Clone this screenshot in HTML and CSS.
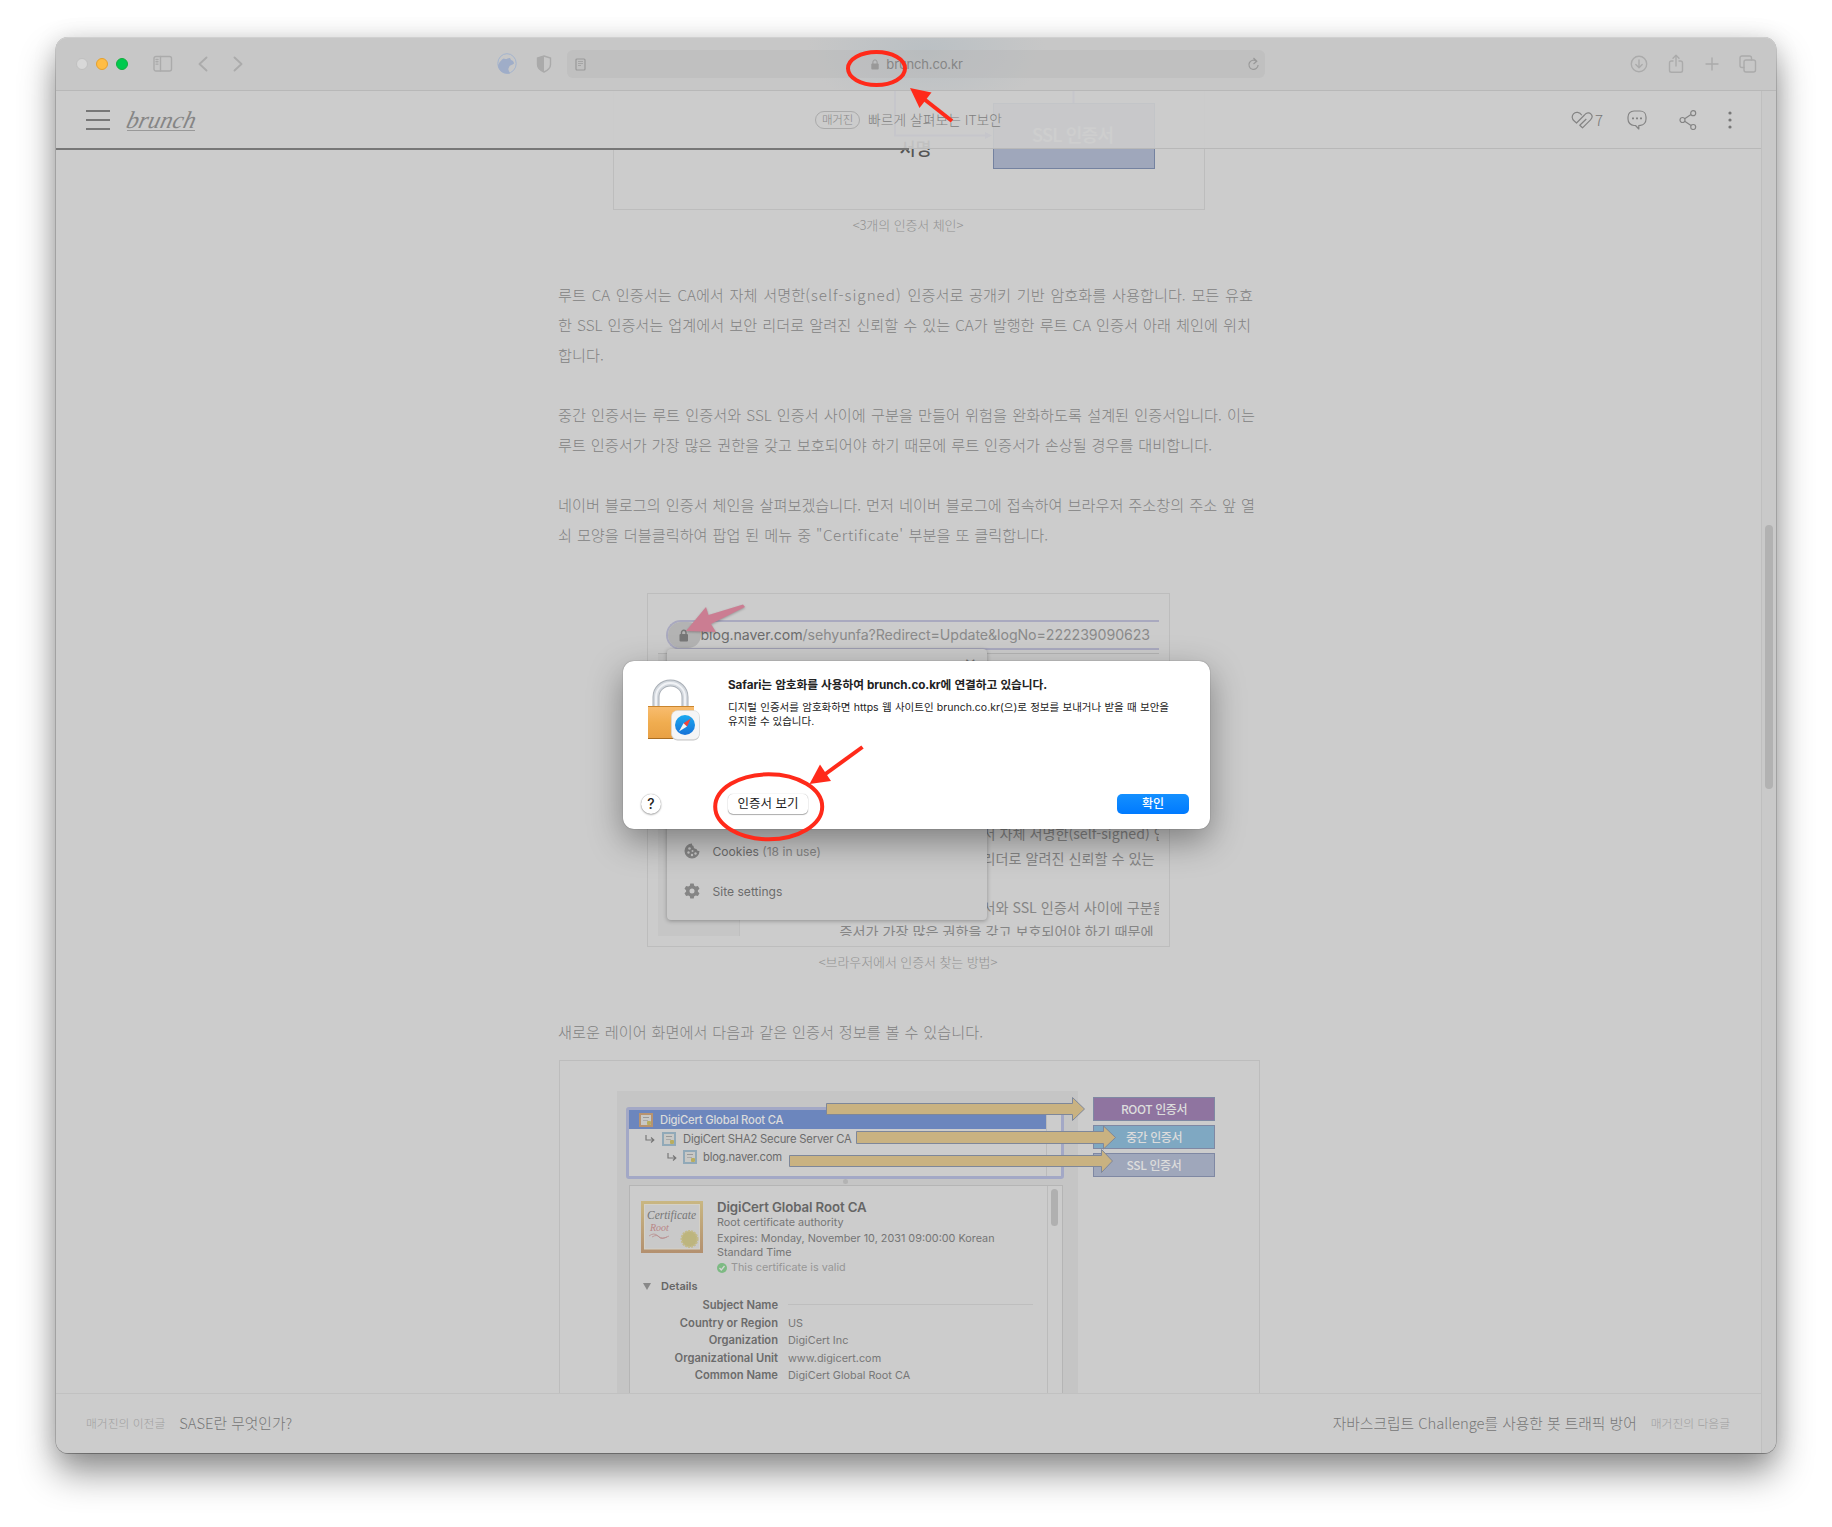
FILE: index.html
```html
<!DOCTYPE html>
<html lang="ko">
<head>
<meta charset="utf-8">
<title>brunch.co.kr</title>
<link rel="stylesheet" href="styles.css">
</head>
<body>
<div class="window">
  <div class="toolbar">
    <div class="lights"><i class="light off"></i><i class="light min"></i><i class="light max"></i></div>
    <svg class="ic sidebar" width="20" height="18" viewBox="0 0 20 18"><rect x="1" y="1.500" width="17.500" height="14.500" rx="2"/><path d="M7.500 1.500V16M3 4.500h2M3 6.800h2M3 9.100h2"/></svg>
    <svg class="ic nav" width="10" height="16" viewBox="0 0 10 16"><path d="M8.500 1.500L1.500 8L8.500 14.500"/></svg>
    <svg class="ic nav next" width="10" height="16" viewBox="0 0 10 16"><path d="M1.500 1.500L8.500 8L1.500 14.500"/></svg>
    <svg class="wolf" width="20" height="22" viewBox="0 0 20 22"><ellipse cx="10" cy="10.500" rx="9.200" ry="9.800" fill="none" stroke="#a3b4cf"/><path d="M1 13C1.500 9.500 4 8 5 6.500L6.500 5.500L8.500 6C10 6 12 4.500 13 5L14 7C16 7.500 17 9 17 10.500C15 12 13.500 12 12.500 13C12.500 14.500 11 15 11.500 17L13 20.500C7 21.500 2 18.500 1 13Z" fill="#9fadc8"/></svg>
    <svg class="shield" width="16" height="18" viewBox="0 0 16 18"><path d="M8 1L14.500 3V9.500C14.500 13 11 15.700 8 17C5 15.700 1.500 13 1.500 9.500V3Z" fill="none" stroke="#aaa" stroke-width="1.400"/><path d="M8 1V17C5 15.700 1.500 13 1.500 9.500V3Z" fill="#aaa"/></svg>
    <div class="address">
      <svg class="reader" width="11" height="13" viewBox="0 0 11 13"><rect x="1" y="1" width="9" height="11" rx="1" fill="none" stroke="#999" stroke-width="1.200"/><path d="M3 3.500h5M3 5.500h5M3 7.500h3" stroke="#a5a5a5"/></svg>
      <div class="host"><svg width="8" height="11" viewBox="0 0 8 11"><rect x="0.300" y="4.500" width="7.400" height="6" rx="1" fill="#999"/><path d="M1.900 5V3A2.100 2.100 0 0 1 6.100 3V5" fill="none" stroke="#999"/></svg><span>brunch.co.kr</span></div>
      <svg class="reload" width="13" height="14" viewBox="0 0 13 14"><path d="M9.500 4.300A4.600 4.600 0 1 0 11.100 8M6.500 1L9.800 4.300L6.500 7" fill="none" stroke="#999" stroke-width="1.200"/></svg>
    </div>
    <div class="tools">
      <svg class="ic" width="18" height="18" viewBox="0 0 18 18"><circle cx="9" cy="9" r="7.700"/><path d="M9 5V12.500M5.800 9.500L9 12.700L12.200 9.500"/></svg>
      <svg class="ic" width="16" height="20" viewBox="0 0 16 20"><path d="M5 7H3.500Q1.500 7 1.500 9V16.500Q1.500 18.300 3.500 18.300H12.500Q14.500 18.300 14.500 16.500V9Q14.500 7 12.500 7H11M8 12V1.500M5 4.300L8 1.300L11 4.300"/></svg>
      <svg class="ic" width="14" height="14" viewBox="0 0 14 14"><path d="M7 1V13M1 7H13"/></svg>
      <svg class="ic" width="18" height="18" viewBox="0 0 18 18"><rect x="5" y="5" width="11.500" height="12" rx="2"/><path d="M5 12.500H3Q1 12.500 1 10.500V3Q1 1 3 1H10.500Q12.500 1 12.500 3V5"/></svg>
    </div>
  </div>

  <div class="viewport">
    <div class="page">
      <article class="article">
        <figure class="fig chain">
          <svg width="590" height="118" viewBox="0 0 590 118">
            <rect x="379.500" y="12.500" width="161" height="65" fill="#9fa7bb" stroke="#7482a0"/>
            <text x="459" y="51" class="chain-label" text-anchor="middle" textLength="82">SSL 인증서</text>
            <path d="M281 0V44.500H374M459.500 0V12" fill="none" stroke="#8f8fc0" stroke-width="2"/>
            <path d="M371 41L378 44.500L371 48Z" fill="#8f8fc0"/>
            <text x="285.500" y="64" class="sign">서명</text>
          </svg>
        </figure>
        <p class="caption">&lt;3개의 인증서 체인&gt;</p>
        <p class="para"><span class="w695">루트 CA 인증서는 CA에서 자체 서명한<em>(self-signed)</em> 인증서로 공개키 기반 암호화를 사용합니다. 모든 유효</span><span class="w693">한 SSL 인증서는 업계에서 보안 리더로 알려진 신뢰할 수 있는 CA가 발행한 루트 CA 인증서 아래 체인에 위치</span><span class="w47">합니다.</span></p>
        <p class="para"><span class="w697">중간 인증서는 루트 인증서와 SSL 인증서 사이에 구분을 만들어 위험을 완화하도록 설계된 인증서입니다. 이는</span><span class="w654">루트 인증서가 가장 많은 권한을 갖고 보호되어야 하기 때문에 루트 인증서가 손상될 경우를 대비합니다.</span></p>
        <p class="para"><span class="w697">네이버 블로그의 인증서 체인을 살펴보겠습니다. 먼저 네이버 블로그에 접속하여 브라우저 주소창의 주소 앞 열</span><span class="w490">쇠 모양을 더블클릭하여 팝업 된 메뉴 중 <em class="c">"Certificate'</em> 부분을 또 클릭합니다.</span></p>

        <figure class="fig howto">
          <div class="shot">
            <div class="omnibox"><span class="lockpill"><svg width="10" height="13" viewBox="0 0 10 13"><rect x="0.500" y="5" width="8.500" height="7.500" rx="1" fill="#777"/><path d="M2.500 5.500V3.500A2.200 2.200 0 0 1 7 3.500V5.500" fill="none" stroke="#777" stroke-width="1.400"/></svg></span><span class="url"><b>blog.naver.com</b>/sehyunfa?Redirect=Update&amp;logNo=222239090623</span></div>
            <div class="underpage">
              <div class="leftpane"></div>
              <div class="copy"><p class="in">서 자체 서명한(self-signed) 인</p><p class="in">리더로 알려진 신뢰할 수 있는</p><p>&nbsp;</p><p class="in">서와 SSL 인증서 사이에 구분을</p><p>증서가 가장 많은 권한을 갖고 보호되어야 하기 때문에</p></div>
            </div>
            <div class="popup">
              <span class="close">✕</span>
              <div class="item"><svg width="16" height="16" viewBox="0 0 16 16"><path d="M8 .5A7.500 7.500 0 1 0 15.500 8A2.500 2.500 0 0 1 12.500 6A3 3 0 0 1 9.500 3A2 2 0 0 1 8 .5Z" fill="#858585"/><g fill="#cacaca"><circle cx="5.500" cy="5.500" r="1.300"/><circle cx="4.500" cy="9.500" r="1.200"/><circle cx="8.500" cy="8" r="1"/><circle cx="8" cy="12" r="1.200"/><circle cx="11.500" cy="10.500" r="1.200"/></g></svg><span>Cookies <em>(18 in use)</em></span></div>
              <div class="item"><svg width="16" height="16" viewBox="0 0 16 16"><path fill-rule="evenodd" fill="#858585" d="M6.300 .5H9.700L10.200 2.700L11.700 3.600L13.900 2.900L15.500 5.800L13.900 7.200V8.800L15.500 10.200L13.900 13.100L11.700 12.400L10.200 13.300L9.700 15.500H6.300L5.800 13.300L4.300 12.400L2.100 13.100L.5 10.200L2.100 8.800V7.200L.5 5.800L2.100 2.900L4.300 3.600L5.800 2.700ZM8 5.500A2.500 2.500 0 1 0 8 10.500A2.500 2.500 0 1 0 8 5.500Z"/></svg><span>Site settings</span></div>
            </div>
            <svg class="pinkarrow" width="66" height="34" viewBox="0 0 66 34"><path d="M3 29L23 5L25.500 13L60 2.500L62 5L28 22L33 30Z" fill="#cb7d92"/></svg>
          </div>
        </figure>
        <p class="caption">&lt;브라우저에서 인증서 찾는 방법&gt;</p>
        <p class="para last"><span class="w425">새로운 레이어 화면에서 다음과 같은 인증서 정보를 볼 수 있습니다.</span></p>

        <figure class="fig cert">
          <div class="certwin">
            <div class="tree">
              <div class="rows">
                <div class="row sel"><i class="leaf gold"></i><span>DigiCert Global Root CA</span></div>
                <div class="row r2"><svg width="10" height="10" viewBox="0 0 10 10"><path d="M1 1V6H8.500M6 3.500L8.800 6L6 8.500" fill="none" stroke="#777" stroke-width="1.200"/></svg><i class="leaf"></i><span>DigiCert SHA2 Secure Server CA</span></div>
                <div class="row r3"><svg width="10" height="10" viewBox="0 0 10 10"><path d="M1 1V6H8.500M6 3.500L8.800 6L6 8.500" fill="none" stroke="#777" stroke-width="1.200"/></svg><i class="leaf"></i><span>blog.naver.com</span></div>
              </div>
              <div class="gutter"></div>
            </div>
            <i class="grip"></i>
            <div class="detail">
              <div class="info">
                <div class="summary">
                  <svg width="62" height="52" viewBox="0 0 62 52"><defs><linearGradient id="frame" x1="0" y1="0" x2="0" y2="1"><stop offset="0" stop-color="#c9b782"/><stop offset="1" stop-color="#b3906f"/></linearGradient></defs><rect width="62" height="52" fill="url(#frame)"/><rect x="3.500" y="3.500" width="55" height="44.500" fill="#c9c9c9" stroke="#d5d1c6"/><text x="6" y="18" class="diploma" textLength="49">Certificate</text><text x="9" y="30" class="diploma red">Root</text><path d="M8 35Q13 31 17 35T28 35M11 36Q16 33 18 36T26 36" fill="none" stroke="#b98e8e" stroke-width=".8"/><circle cx="48.500" cy="38" r="8" fill="#bdb57e" stroke="#c4bb8b" stroke-width="2" stroke-dasharray="2 1"/></svg>
                  <div class="who"><h4>DigiCert Global Root CA</h4><p>Root certificate authority</p><p class="exp">Expires: Monday, November 10, 2031 09:00:00 Korean<br>Standard Time</p><p class="valid"><svg width="10" height="10" viewBox="0 0 10 10"><circle cx="5" cy="5" r="5" fill="#7dba83"/><path d="M2.500 5L4.300 7L7.500 3" fill="none" stroke="#d5d5d5" stroke-width="1.300"/></svg>This certificate is valid</p></div>
                </div>
                <div class="dt"><i class="tri"></i><span>Details</span></div>
                <dl><dt>Subject Name</dt><dd class="rule"></dd><dt>Country or Region</dt><dd>US</dd><dt>Organization</dt><dd>DigiCert Inc</dd><dt>Organizational Unit</dt><dd>www.digicert.com</dd><dt>Common Name</dt><dd>DigiCert Global Root CA</dd></dl>
              </div>
              <div class="gutter"><i></i></div>
            </div>
          </div>
          <div class="labels"><span class="root">ROOT 인증서</span><span class="mid">중간 인증서</span><span class="ssl">SSL 인증서</span></div>
          <svg class="arrows" width="340" height="90" viewBox="780 1090 340 90"><g fill="#c9b281" stroke="#7e8799" stroke-width="1"><path d="M826.500 1103.500H1072.500V1097.500L1084.500 1109L1072.500 1120.500V1114.500H826.500Z"/><path d="M856.500 1131.500H1103.500V1126L1115.500 1137.500L1103.500 1149V1143.500H856.500Z"/><path d="M789.500 1155.500H1101.500V1149.500L1112.500 1161L1101.500 1172.500V1166.500H789.500Z"/></g></svg>
        </figure>
      </article>

      <header class="header">
        <div class="burger"><i></i><i></i><i></i></div>
        <div class="logo"><span>brunch</span></div>
        <div class="mag"><span class="pill">매거진</span><span class="magname">빠르게 살펴보는 IT보안</span></div>
        <div class="acts">
          <svg class="hc" width="22" height="18" viewBox="0 0 22 18"><path d="M10.800 4.200C8.800 .8 4.500 .5 2.500 2.800C.5 5 1 8 3 9.800L5.500 12L13.500 4C15.500 1.300 18.500 1.500 19.800 2.800C21.500 4.500 21.300 7 19.500 8.800L11.500 16.800L8.800 14.200L15.300 8"/></svg><b>7</b>
          <svg class="hc cm" width="20" height="20" viewBox="0 0 20 20"><path d="M7 1H13C16.500 1 19 3.500 19 7V9C19 12.500 16.500 15 13.500 15.300L11.800 15.500V19L8.500 15.500H7C3.500 15.300 1 12.500 1 9V7C1 3.500 3.500 1 7 1Z"/><path d="M5 8.300h2M9 8.300h2M13 8.300h2" stroke-width="1.800"/></svg>
          <svg class="hc sh" width="18" height="20" viewBox="0 0 18 20"><circle cx="3.500" cy="10" r="2.500"/><circle cx="14.200" cy="3.200" r="2.500"/><circle cx="14.200" cy="17" r="2.500"/><path d="M5.700 8.700L12 4.600M5.700 11.300L12 15.600"/></svg>
          <svg class="dots" width="4" height="18" viewBox="0 0 4 18"><g fill="#777"><circle cx="2" cy="2" r="1.600"/><circle cx="2" cy="9" r="1.600"/><circle cx="2" cy="16" r="1.600"/></g></svg>
        </div>
        <div class="progress"></div>
      </header>

      <footer class="footer">
        <div><small>매거진의 이전글</small><span>SASE란 무엇인가?</span></div>
        <div><span>자바스크립트 Challenge를 사용한 봇 트래픽 방어</span><small>매거진의 다음글</small></div>
      </footer>
    </div>
    <div class="scroll"><i></i></div>
  </div>

  <div class="dialog">
    <div class="msg">
      <svg class="padlock" width="54" height="64" viewBox="0 0 54 64"><defs><linearGradient id="gold" x1="0" y1="0" x2="0" y2="1"><stop offset="0" stop-color="#f9bd70"/><stop offset=".5" stop-color="#f0ad50"/><stop offset="1" stop-color="#e8a044"/></linearGradient><linearGradient id="blue" x1="0" y1="0" x2="0" y2="1"><stop offset="0" stop-color="#1ba9f0"/><stop offset="1" stop-color="#1672d8"/></linearGradient></defs><path d="M9 29V18A14.500 14 0 0 1 38 18V29" fill="none" stroke="#a9afb6" stroke-width="7"/><path d="M9 29V18A14.500 14 0 0 1 38 18V29" fill="none" stroke="#d3d8de" stroke-width="5"/><path d="M9 29V18A14.500 14 0 0 1 38 18V29" fill="none" stroke="#f0f2f5" stroke-width="2"/><rect x="1" y="27" width="46" height="33" rx="1.500" fill="url(#gold)"/><path d="M1 27.500H47" stroke="#c9852e"/><path d="M1 59.500H47" stroke="#aa6e23"/><rect x="24.500" y="32.500" width="28" height="29" rx="6" fill="#c4c4c4"/><rect x="24.500" y="31.500" width="28" height="29" rx="6" fill="#f5f5f6" stroke="#d5d5d5" stroke-width=".6"/><circle cx="38" cy="46" r="10" fill="url(#blue)"/><path d="M44 39.500L40 47.500L36.500 44.200Z" fill="#f0463c"/><path d="M32 52.500L36.500 44.200L40 47.500Z" fill="#f5f5f5"/></svg>
      <div class="words"><h3>Safari는 암호화를 사용하여 brunch.co.kr에 연결하고 있습니다.</h3><p><span class="l1">디지털 인증서를 암호화하면 https 웹 사이트인 brunch.co.kr(으)로 정보를 보내거나 받을 때 보안을</span><span class="l2">유지할 수 있습니다.</span></p></div>
    </div>
    <div class="btns"><span class="help">?</span><span class="btn">인증서 보기</span><span class="ok">확인</span></div>
  </div>
</div>
<svg class="marks" width="1832" height="1527" viewBox="0 0 1832 1527"><g fill="none" stroke="#ff2a1a" stroke-width="4"><ellipse cx="876.500" cy="68.500" rx="28.500" ry="16.500"/><path d="M952 121L924 99"/><ellipse cx="768.700" cy="806.800" rx="53.500" ry="32.500"/><path d="M862.500 747L824 775"/></g><g fill="#ff2a1a"><path d="M910 88L931.500 92.500L919.500 108Z"/><path d="M809.500 784L820 764.500L831 781Z"/></g></svg>
</body>
</html>
```
FILE: styles.css
```css
* { box-sizing: border-box; }
body, p, figure, h3, h4, dl, dd { margin: 0; }
body { width: 1832px; height: 1527px; overflow: hidden; padding: 37px 0 0 56px; background: #fff; font-family: Inter, "Noto Sans CJK KR", sans-serif; color: #777; position: relative; }
svg { display: block; flex: none; }
i { display: block; flex: none; }
.window { position: relative; width: 1720px; height: 1416px; border-radius: 12px; background: #ccc; box-shadow: 0 .5px 0 .5px rgba(0,0,0,.3), 0 20px 36px rgba(0,0,0,.42), 0 2px 24px rgba(0,0,0,.12); }

.toolbar { height: 54px; border-bottom: 1px solid #b8b8b8; border-radius: 12px 12px 0 0; border-top: 1px solid #d0d0d0; background: radial-gradient(ellipse 120px 60px at 870px 14px, #bac0c4, rgba(186,192,196,0)), #c7c7c7; display: flex; align-items: center; padding-left: 20px; }
.lights { display: flex; gap: 8px; width: 77px; }
.light { width: 12px; height: 12px; border-radius: 50%; }
.off { background: #d8d8d8; border: 1px solid #c0c0c0; }
.min { background: #ffbd44; border: 1px solid #e6a02c; }
.max { background: #00ca4e; border: 1px solid #14ac3e; }
.ic { fill: none; stroke: #ababab; stroke-width: 1.4; stroke-linecap: round; stroke-linejoin: round; }
.nav { margin-left: 25px; stroke-width: 1.9; }
.wolf { margin-left: 254px; }
.shield { margin-left: 19px; }
.address { margin-left: 15px; width: 698px; height: 28px; border-radius: 6px; background: rgba(185,185,185,.45); display: flex; align-items: center; justify-content: space-between; padding: 0 5px 0 8px; }
.host { display: flex; align-items: center; gap: 7px; font-size: 13px; letter-spacing: -.15px; color: #858585; padding-left: 1px; }
.tools { display: flex; align-items: center; margin-left: 365px; gap: 20.400px; }

.viewport { height: 1362px; display: flex; overflow: hidden; border-radius: 0 0 12px 12px; }
.page { position: relative; width: 1705px; overflow: hidden; flex: none; }
.scroll { width: 15px; border-left: 1px solid #bfbfbf; background: #c9c9c9; padding: 434px 0 0 3px; }
.scroll i { width: 8px; height: 264px; border-radius: 4px; background: #b2b2b2; }

.article { width: 702px; margin-left: 502px; display: flex; flex-direction: column; align-items: center; font-family: "Noto Sans CJK KR", sans-serif; }
.fig { border: 1px solid #bdbdbd; }
.chain { width: 592px; height: 119px; border-top: 0; }
.chain-label { font-size: 18px; font-weight: 500; fill: #e2e2e2; }
.sign { font-size: 17.500px; font-weight: 500; fill: #555; }
.caption { height: 32px; line-height: 30px; font-size: 13px; font-weight: 300; color: #929292; letter-spacing: -.1px; padding-right: 2px; }
.para { align-self: stretch; margin-top: 30px; font-size: 15.200px; line-height: 30px; font-weight: 300; color: #828282; position: relative; top: -1px; }
.caption + .para { margin-top: 38px; }
.para span { display: block; white-space: nowrap; text-align-last: justify; }
.para em { font-style: normal; letter-spacing: 1px; }
.para em.c { letter-spacing: .6px; }
.w695 { width: 695px; } .w693 { width: 693px; } .w697 { width: 697px; } .w654 { width: 654px; } .w490 { width: 490px; } .w425 { width: 425px; } .w47 { width: 47px; }

.howto { width: 523px; height: 354px; margin-top: 43px; margin-right: 2px; padding: 10px 10px 10px 10px; }
.shot { position: relative; height: 332px; overflow: hidden; display: flex; flex-direction: column; padding-top: 16px; }
.omnibox { margin-left: 8px; height: 30px; border: 2px solid #a9a9bf; border-right: 0; border-radius: 15px 0 0 15px; display: flex; align-items: center; flex: none; }
.lockpill { width: 33px; height: 26px; border-radius: 13px; background: #b3b3b3; display: flex; align-items: center; justify-content: center; }
.url { font: 14.200px Inter, sans-serif; color: #8a8a8a; white-space: nowrap; width: 456px; letter-spacing: -.08px; margin-top: -2px; }
.url b { font-weight: 400; color: #6c6c6c; }
.underpage { margin-top: 3px; height: 283px; border-top: 1px solid #b5b5b5; display: flex; flex: none; }
.leftpane { width: 82px; background: #c6c6c6; border-right: 1px solid #bfbfbf; flex: none; }
.copy { padding: 167px 0 0 100px; font-size: 14.150px; line-height: 24.500px; color: #858585; white-space: nowrap; font-weight: 400; }
.copy .in { padding-left: 143px; }
.popup { position: absolute; left: 9px; top: 45px; width: 320px; height: 271px; background: #cacaca; border-radius: 4px; box-shadow: 0 1px 4px rgba(0,0,0,.3); padding: 182px 0 0 17px; }
.close { position: absolute; right: 10px; top: 7px; font-size: 15px; color: #777; line-height: 14px; }
.item { height: 40px; display: flex; align-items: center; gap: 13px; font: 12.100px Inter, sans-serif; color: #6c6c6c; }
.item em { font-style: normal; color: #858585; }
.pinkarrow { position: absolute; left: 25px; top: -2px; filter: drop-shadow(0 1px 1px rgba(0,0,0,.25)); }

.para.last { width: 100%; }
.cert { position: relative; margin-top: 13px; margin-left: 1px; width: 701px; height: 340px; display: flex; padding-left: 57px; padding-top: 30px; gap: 15px; font-family: Inter, sans-serif; }
.certwin { width: 461px; height: 310px; background: #c5c5c5; padding: 16px 14px 0 9px; display: flex; flex-direction: column; }
.tree { height: 72px; border: 3px solid #a3a8c6; border-radius: 3px; background: #cccccc; display: flex; flex: none; }
.rows { flex: 1; font-size: 11.250px; color: #6b6b6b; letter-spacing: -.2px; }
.row { display: flex; align-items: center; height: 19px; white-space: nowrap; }
.sel { background: #6c86bd; color: #dadada; font-weight: 500; padding-left: 10px; gap: 7px; }
.r2 { padding-left: 16px; height: 19px; gap: 7px; }
.r3 { padding-left: 38px; gap: 6px; height: 18px; }
.leaf { width: 14px; height: 14px; border: 2px solid #91a9b8; background: linear-gradient(#999, #999) 2px 2px / 6px 1px no-repeat, linear-gradient(#aaa, #aaa) 2px 5px / 5px 1px no-repeat, radial-gradient(circle at 8px 8px, #b9ad5e 2px, transparent 2.5px), #c8c8c5; }
.leaf.gold { border-color: #b8936f; }
.gutter { width: 15px; border-left: 1px solid #bbb; padding: 3px 0 0 3px; flex: none; }
.gutter i { width: 7px; height: 37px; border-radius: 4px; background: #b0b0b0; }
.grip { width: 5px; height: 5px; border-radius: 50%; background: #b3b3b3; margin: 0 auto; }
.detail { margin: 1px 1px 0 3px; flex: 1; border: 1px solid #b5b5b5; background: #ccc; display: flex; }
.info { flex: 1; padding: 15px 0 0 11px; }
.summary { display: flex; gap: 14px; }
.who { font-size: 10.820px; color: #757575; line-height: 14px; white-space: nowrap; }
.who h4 { font-size: 13.250px; font-weight: 600; line-height: 14px; color: #666; margin: -1px 0 2px; letter-spacing: -.1px; }
.exp { margin-top: 2px; }
.valid { margin-top: 1px; display: flex; align-items: center; gap: 4px; color: #969696; }
.dt { display: flex; align-items: center; gap: 10px; height: 22px; font-size: 11px; font-weight: 600; color: #666; }
.tri { margin-left: 2px; border: 4px solid transparent; border-top: 7px solid #888; border-bottom: 0; }
dl { display: grid; grid-template-columns: 137px 245px; column-gap: 10px; grid-auto-rows: 17.500px; font-size: 10.850px; line-height: 16px; }
dt { text-align: right; font-weight: 600; font-size: 11.200px; color: #6b6b6b; white-space: nowrap; }
.rule { height: 1px; background: #bebebe; margin-top: 7px; }
.diploma { font: italic 11.500px "Liberation Serif", serif; fill: #777; }
.red { font-size: 10px; fill: #b98585; }
.labels { padding-top: 6px; display: flex; flex-direction: column; gap: 4px; }
.labels span { width: 122px; height: 24px; border: 1px solid #7f88a3; color: #dcdcdc; font: 500 12px/21px "Noto Sans CJK KR", sans-serif; letter-spacing: -.4px; text-align: center; }
.labels .root { background: #8f74a0; } .labels .mid { background: #7fa8c2; } .labels .ssl { background: #9fa7bb; }
.arrows { position: absolute; left: 220px; top: 29px; }

.header { position: absolute; left: 0; top: 0; width: 1705px; height: 58px; background: rgba(204,204,204,.9); border-bottom: 1px solid #b8b8b8; display: flex; align-items: center; padding-left: 30px; }
.burger { display: flex; flex-direction: column; gap: 7px; width: 24px; }
.burger i { height: 2px; background: #777; }
.logo { margin-left: 17px; width: 68px; height: 22px; margin-top: 1px; border-bottom: 1px solid #999; font: italic 24px/23px "Liberation Serif", serif; color: #858585; }
.logo span { display: block; transform: skewX(-14deg); letter-spacing: .2px; }
.mag { margin-left: 620px; display: flex; align-items: center; gap: 8px; font-family: "Noto Sans CJK KR", sans-serif; font-weight: 300; color: #808080; }
.pill { width: 45px; height: 18px; border: 1px solid #aaa; border-radius: 9px; font-size: 11.500px; line-height: 15px; text-align: center; letter-spacing: -.3px; color: #8a8a8a; }
.magname { width: 134px; font-size: 13.800px; line-height: 20px; margin-top: -2px; white-space: nowrap; text-align-last: justify; }
.acts { margin-left: 569px; display: flex; align-items: center; }
.hc { fill: none; stroke: #848484; stroke-width: 1.2; stroke-linejoin: round; }
.acts b { font: 300 15px/18px "Noto Sans CJK KR", sans-serif; margin-left: 2px; width: 9px; color: #777; }
.cm { margin-left: 23px; } .sh { margin-left: 32px; } .dots { margin-left: 31px; }
.progress { position: absolute; left: 0; top: 57px; width: 853px; height: 2px; background: #777; }

.footer { position: absolute; left: 0; bottom: 0; width: 1705px; height: 60px; border-top: 1px solid #c1c1c1; background: #ccc; display: flex; align-items: center; justify-content: space-between; padding: 0 31px 2px 30px; font-family: "Noto Sans CJK KR", sans-serif; font-weight: 300; white-space: nowrap; }
.footer div { display: flex; align-items: center; gap: 14px; font-size: 14.750px; color: #777; }
.footer small { font-size: 11.800px; color: #a0a0a0; }

.dialog { position: absolute; left: 567px; top: 624px; width: 587px; height: 168px; border-radius: 11px; background: #fff; box-shadow: 0 0 1px rgba(0,0,0,.6), 0 12px 34px rgba(0,0,0,.38); padding: 16px 21px 0 18px; display: flex; flex-direction: column; }
.msg { display: flex; padding-left: 6px; height: 116px; }
.padlock { margin-top: 2px; }
.words { margin-left: 27px; color: #222; white-space: nowrap; }
h3 { width: 319px; font-size: 11.700px; line-height: 18px; margin-top: -1px; font-weight: 700; letter-spacing: -.06px; text-align-last: justify; }
.words p { margin-top: 7px; font-size: 10.500px; line-height: 14px; }
.words p span { display: block; text-align-last: justify; }
.words .l1 { width: 441px; } .words .l2 { width: 86px; }
.btns { display: flex; align-items: center; height: 22px; }
.help { width: 20px; height: 20px; border-radius: 50%; box-shadow: 0 0 1px rgba(0,0,0,.4), 0 1px 2px rgba(0,0,0,.3); font: 500 14px/20px Inter, sans-serif; text-align: center; color: #222; }
.btn { margin-left: 67px; width: 80px; height: 20px; border-radius: 5px; box-shadow: 0 0 1px rgba(0,0,0,.35), 0 1px 1px rgba(0,0,0,.3); font: 12.500px/18px "Noto Sans CJK KR", sans-serif; text-align: center; color: #222; }
.ok { margin-left: auto; width: 72px; height: 20px; border-radius: 5px; background: linear-gradient(#1490ff, #007aff); font: 500 12px/18px "Noto Sans CJK KR", sans-serif; color: #fff; text-align: center; }
.marks { position: absolute; left: 0; top: 0; pointer-events: none; }
```
